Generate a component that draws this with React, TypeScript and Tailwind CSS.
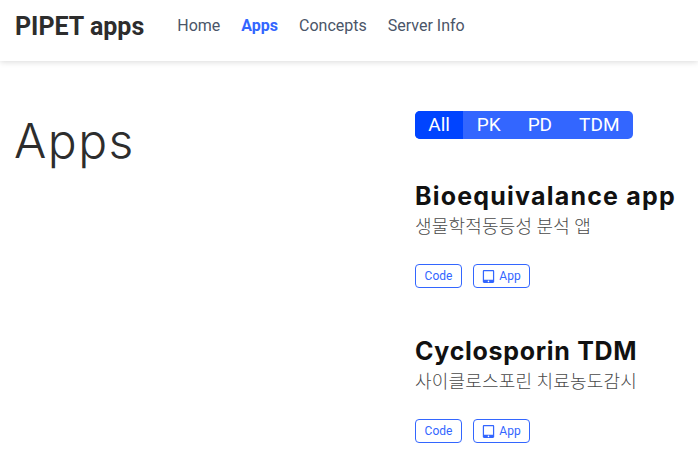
import React from 'react';
import { FaTabletAlt } from 'react-icons/fa';

const navLinks = ['Home', 'Apps', 'Concepts', 'Server Info'];
const filters = ['All', 'PK', 'PD', 'TDM'];

const apps = [
  { title: 'Bioequivalance app', subtitle: '생물학적동등성 분석 앱', titleClass: 'tracking-[1.2px]' },
  { title: 'Cyclosporin TDM', subtitle: '사이클로스포린 치료농도감시', titleClass: 'tracking-[0.7px]' },
];

const App: React.FC = () => {
  return (
    <div className="h-[462px] overflow-hidden bg-white font-['Roboto',sans-serif]">
      {/* Top navigation */}
      <nav className="flex h-[61px] items-start bg-white pl-[15px] shadow-[0_1px_6px_rgba(0,0,0,0.15)]">
        <span className="mt-[11px] text-[25px] leading-[32px] font-bold text-[#2d2d2d]">PIPET apps</span>
        <ul className="mt-[14px] ml-[33px] flex gap-[21px] text-[16px] leading-[24px]">
          {navLinks.map((link) => (
            <li key={link} className={link === 'Apps' ? 'font-bold text-[#3366ff]' : 'text-[#4a5568]'}>
              {link}
            </li>
          ))}
        </ul>
      </nav>

      <main className="flex pt-[50px]">
        <div className="w-[415px] pl-[14px]">
          <h1 className="text-[48px] leading-[60px] font-light tracking-[1.5px] text-[#2d2d2d] font-['Inter',sans-serif]">
            Apps
          </h1>
        </div>

        <div className="flex-1">
          <div className="flex h-[28px] w-[218px] overflow-hidden rounded-[5px] bg-[#3366ff] text-[19px] leading-[28px] text-white">
            {filters.map((filter) => (
              <span key={filter} className={filter === 'All' ? 'w-[49px] bg-[#0044ff] text-center' : 'px-[13.5px]'}>
                {filter}
              </span>
            ))}
          </div>

          <div className="mt-[41px] flex flex-col gap-[47px]">
            {apps.map((app) => (
              <section key={app.title}>
                <h2 className={`text-[25px] leading-[32px] font-bold text-[#111111] font-['Inter',sans-serif] ${app.titleClass}`}>
                  {app.title}
                </h2>
                <p className="mt-[1px] text-[18px] leading-[24px] font-light tracking-[0.2px] text-[#4a4a4a] font-['Noto_Sans_CJK_KR',sans-serif]">
                  {app.subtitle}
                </p>
                <div className="mt-[27px] flex gap-[11px] text-[12px] text-[#3366ff]">
                  <a className="flex h-[24px] w-[47px] items-center justify-center rounded-[4px] border border-[#3366ff]">
                    Code
                  </a>
                  <a className="flex h-[24px] w-[57px] items-center justify-center gap-[4px] rounded-[4px] border border-[#3366ff]">
                    <FaTabletAlt size={13} />
                    App
                  </a>
                </div>
              </section>
            ))}
          </div>
        </div>
      </main>
    </div>
  );
};

export default App;
